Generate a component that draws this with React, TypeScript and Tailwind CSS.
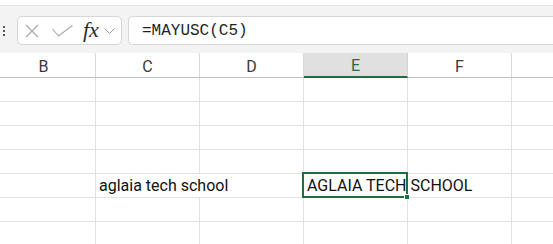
const COLS = ['B', 'C', 'D', 'E', 'F', 'G']
const ROWS = 7
const SELECTED_COL = 'E'
// G sits mostly past the right edge, its letter is not in view
const HIDDEN_LABELS = ['G']

function FormulaBar() {
  return (
    <div className="h-[48px] bg-[#f3f3f3] border-t border-[#e6e6e6] flex items-start pt-[10px]">
      {/* grip dots */}
      <div className="w-[17px] h-[29px] flex flex-col items-start justify-center gap-[2px] pl-[3px]">
        <span className="w-[2px] h-[2px] bg-[#555]" />
        <span className="w-[2px] h-[2px] bg-[#555]" />
        <span className="w-[2px] h-[2px] bg-[#555]" />
      </div>

      {/* cancel / enter / fx */}
      <div className="w-[105px] h-[29px] bg-white border border-[#d6d6d6] rounded-[5px] flex items-center pl-[7px]">
        <svg width="14" height="14" viewBox="0 0 14 14" className="shrink-0">
          <path d="M1 1 L13 13 M13 1 L1 13" stroke="#a9a9a9" strokeWidth="1.1" fill="none" />
        </svg>
        <svg width="21" height="12" viewBox="0 0 21 12" className="ml-[13px] shrink-0">
          <path d="M0.5 4 L6.5 11 L20.5 0.5" stroke="#a9a9a9" strokeWidth="1.1" fill="none" />
        </svg>
        <span
          className="ml-[10px] text-[22px] leading-none italic text-[#2b2b2b] -mt-[2px]"
          style={{ fontFamily: '"Liberation Serif", "DejaVu Serif", serif' }}
        >
          fx
        </span>
        <svg width="11" height="7" viewBox="0 0 11 7" className="ml-[5px] mt-[2px] shrink-0">
          <path d="M0.5 0.5 L5.5 5.5 L10.5 0.5" stroke="#9a9a9a" strokeWidth="1" fill="none" />
        </svg>
      </div>

      {/* formula input */}
      <div className="ml-[6px] flex-1 h-[29px] bg-white border border-[#d6d6d6] border-r-0 rounded-l-[5px] flex items-center pl-[13px]">
        <span className="font-['Liberation_Mono',monospace] text-[16px] text-[#1f1f1f] leading-none">
          =MAYUSC(C5)
        </span>
      </div>
    </div>
  )
}

function HeaderRow() {
  return (
    <div className="flex h-[25px] -ml-[8px] border-b border-[#c4c4c4]">
      {COLS.map((c) => {
        const sel = c === SELECTED_COL
        return (
          <div
            key={c}
            className={
              sel
                ? 'w-[104px] shrink-0 border-r border-[#d4d4d4] bg-[#e0e0e0] border-b-2 border-b-[#1e6e42] -mb-px flex items-center justify-center pt-[3px] text-[16px] text-[#1e6e42]'
                : 'w-[104px] shrink-0 border-r border-[#d9d9d9] flex items-center justify-center pt-[3px] text-[16px] text-[#3a3a3a]'
            }
          >
            {HIDDEN_LABELS.includes(c) ? '' : c}
          </div>
        )
      })}
    </div>
  )
}

function Cell({ col, row }: { col: string; row: number }) {
  const isC5 = row === 5 && col === 'C'
  const isE5 = row === 5 && col === 'E'
  const overflowed = isC5 || isE5
  return (
    <div
      className={
        overflowed
          ? 'relative w-[104px] shrink-0 h-full border-r border-transparent'
          : 'relative w-[104px] shrink-0 h-full border-r border-[#e1e1e1]'
      }
    >
      {isC5 && (
        <span className="absolute left-[3px] top-0 whitespace-nowrap leading-[23px] text-[16px] text-[#111]">
          aglaia tech school
        </span>
      )}
      {isE5 && (
        <>
          <span className="absolute left-[3px] top-0 whitespace-nowrap leading-[23px] text-[16px] text-[#111] z-10">
            AGLAIA TECH SCHOOL
          </span>
          <div className="absolute -left-[2px] -top-[2px] -right-[1px] -bottom-[1px] border-2 border-[#1e6e42] z-20" />
          <div className="absolute -right-[3px] -bottom-[3px] w-[6px] h-[6px] bg-[#1e6e42] border border-white z-30" />
        </>
      )}
    </div>
  )
}

export default function App() {
  return (
    <div
      className="w-[553px] h-[244px] overflow-hidden bg-white"
      style={{ fontFamily: 'Roboto, "Noto Sans", sans-serif' }}
    >
      <div className="h-[5px] bg-white" />
      <FormulaBar />
      <HeaderRow />
      {Array.from({ length: ROWS }, (_, i) => i + 1).map((r) => (
        <div key={r} className="flex h-[24px] -ml-[8px] border-b border-[#e1e1e1]">
          {COLS.map((c) => (
            <Cell key={c} col={c} row={r} />
          ))}
        </div>
      ))}
    </div>
  )
}
